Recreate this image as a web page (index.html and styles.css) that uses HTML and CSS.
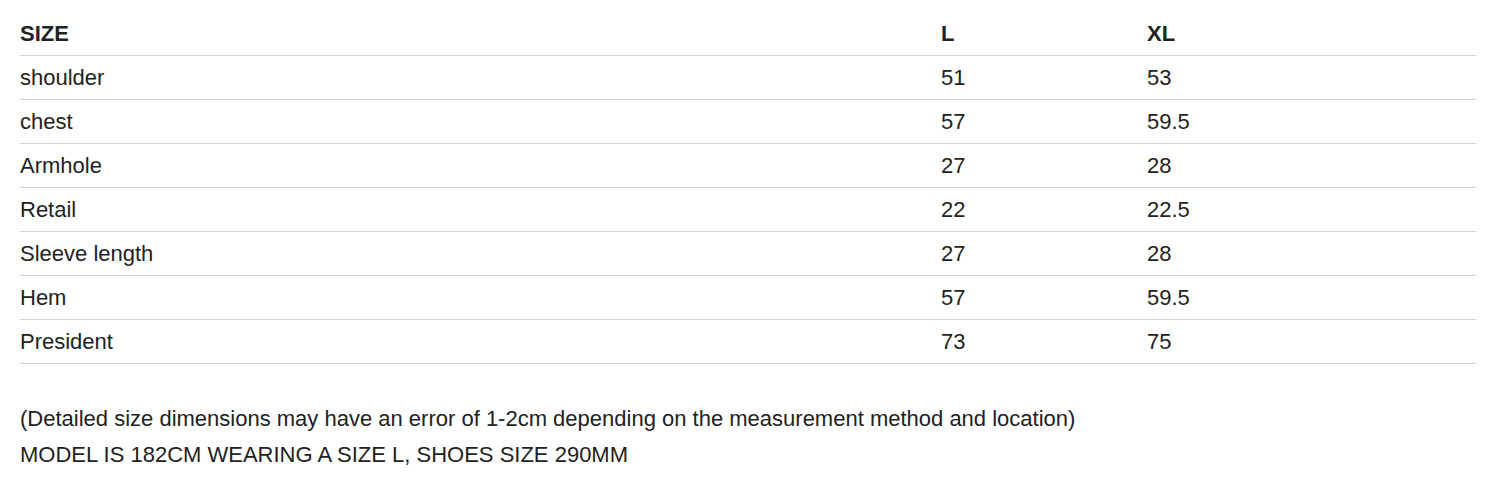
FILE: index.html
```html
<!DOCTYPE html>
<html lang="en">
<head>
<meta charset="utf-8">
<title>Size chart</title>
<link rel="stylesheet" href="styles.css">
</head>
<body>
<div class="page">
  <div class="table">
    <div class="row head"><div>SIZE</div><div>L</div><div>XL</div></div>
    <div class="row"><div>shoulder</div><div>51</div><div>53</div></div>
    <div class="row"><div>chest</div><div>57</div><div>59.5</div></div>
    <div class="row"><div>Armhole</div><div>27</div><div>28</div></div>
    <div class="row"><div>Retail</div><div>22</div><div>22.5</div></div>
    <div class="row"><div>Sleeve length</div><div>27</div><div>28</div></div>
    <div class="row"><div>Hem</div><div>57</div><div>59.5</div></div>
    <div class="row"><div>President</div><div>73</div><div>75</div></div>
  </div>
  <div class="notes">
    <p>(Detailed size dimensions may have an error of 1-2cm depending on the measurement method and location)</p>
    <p>MODEL IS 182CM WEARING A SIZE L, SHOES SIZE 290MM</p>
  </div>
</div>
</body>
</html>
```

FILE: styles.css
```css
html, body {
  margin: 0;
  padding: 0;
  background: #ffffff;
}
body {
  font-family: "Liberation Sans", Arial, Helvetica, sans-serif;
  font-size: 22px;
  color: #222222;
}
.page {
  padding: 12px 20px 0 20px;
}
.table {
  display: flex;
  flex-direction: column;
}
.row {
  display: grid;
  grid-template-columns: 921px 206px 1fr;
  height: 44px;
  align-items: center;
  border-bottom: 1.5px solid #d6d6d6;
  box-sizing: border-box;
}
.row.head {
  font-weight: bold;
}
.notes {
  padding-top: 37px;
}
.notes p {
  margin: 0;
  line-height: 36px;
}
```
